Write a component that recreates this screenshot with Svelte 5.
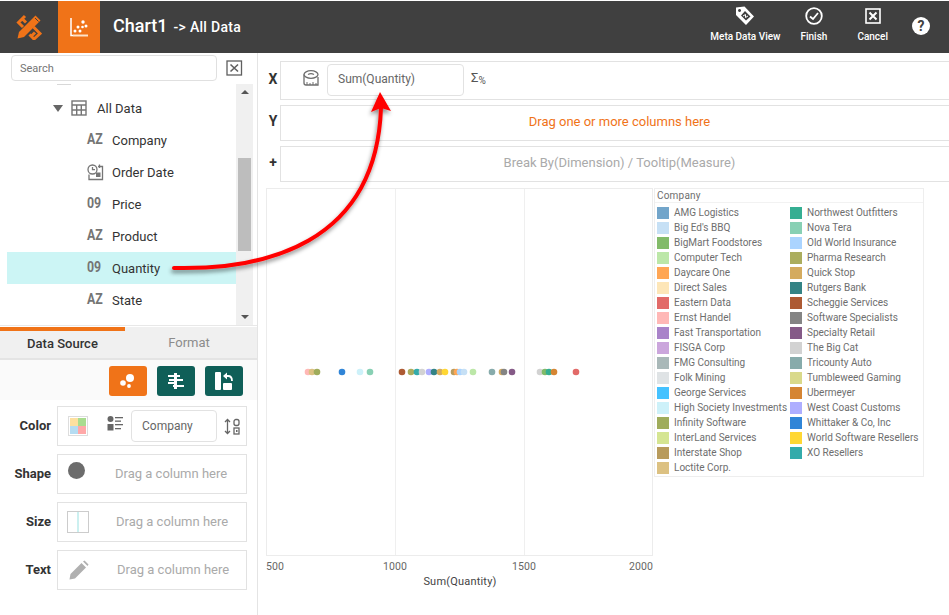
<script>
	const fields = [
		{ name: 'Company', type: 'az' },
		{ name: 'Order Date', type: 'date' },
		{ name: 'Price', type: 'num' },
		{ name: 'Product', type: 'az' },
		{ name: 'Quantity', type: 'num', selected: true },
		{ name: 'State', type: 'az' }
	];

	const legend = [
		['AMG Logistics', '#72a5ca'],
		['Big Ed\'s BBQ', '#c6e0f5'],
		['BigMart Foodstores', '#82bb69'],
		['Computer Tech', '#bce7a8'],
		['Daycare One', '#ffa654'],
		['Direct Sales', '#fde6b8'],
		['Eastern Data', '#e26a68'],
		['Ernst Handel', '#ffb8b6'],
		['Fast Transportation', '#a983c9'],
		['FISGA Corp', '#cba6dc'],
		['FMG Consulting', '#a9b8b8'],
		['Folk Mining', '#dfe3e5'],
		['George Services', '#45c2ff'],
		['High Society Investments', '#cdf1f9'],
		['Infinity Software', '#9fac5b'],
		['InterLand Services', '#d5e592'],
		['Interstate Shop', '#b89b5c'],
		['Loctite Corp.', '#dcc182'],
		['Northwest Outfitters', '#35ae92'],
		['Nova Tera', '#88d0b4'],
		['Old World Insurance', '#abd4ff'],
		['Pharma Research', '#abad5e'],
		['Quick Stop', '#d4ab5f'],
		['Rutgers Bank', '#338385'],
		['Scheggie Services', '#ad5a33'],
		['Software Specialists', '#848484'],
		['Specialty Retail', '#855a87'],
		['The Big Cat', '#d2d2d2'],
		['Tricounty Auto', '#87abab'],
		['Tumbleweed Gaming', '#d9d98a'],
		['Ubermeyer', '#d58533'],
		['West Coast Customs', '#aeaeff'],
		['Whittaker & Co, Inc', '#3085d7'],
		['World Software Resellers', '#ffd733'],
		['XO Resellers', '#33abab']
	];

	// x in page pixels, y is the same for all of them
	const dots = [
		[308, '#ffb8b6'], [312, '#dcc182'], [317, '#9fac5b'], [342, '#3085d7'], [360, '#cdf1f9'],
		[370, '#88d0b4'], [402, '#ad5a33'], [411, '#abad5e'], [417, '#33abab'], [422, '#d2d2d2'],
		[429, '#aeaeff'], [434, '#338385'], [440, '#d4ab5f'], [445, '#ffd733'], [454, '#b89b5c'],
		[457, '#ffa654'], [460, '#abd4ff'], [464, '#c6e0f5'], [473, '#bce7a8'], [492, '#87abab'],
		[502, '#d4ab5f'], [504, '#848484'], [512, '#855a87'], [540, '#d2d2d2'], [545, '#82bb69'],
		[549, '#35ae92'], [554, '#d58533'], [576, '#e26a68']
	];
	const chartLeft = 266;
</script>

<div class="app">
	<header class="topbar">
		<div class="logo">
			<svg width="26" height="26" viewBox="0 0 26 26" fill="none" stroke="#f07318">
				<path d="M19.500 1.500 L24.500 6.500 L8 23 L1.500 24.500 L3 18z" fill="#f07318" stroke="none" />
				<path d="M9 2 L2.500 8.500 L7 13 M6.500 5 L10 8.500" stroke-width="3" />
				<path d="M17.500 13 L24 19.500 L18 25 L13.500 20.500 M19 18.500 L16 21.500" stroke-width="3" />
				<path d="M19 4 L22.500 7.500" stroke="#404040" stroke-width="1" />
			</svg>
		</div>
		<div class="chart-tab">
			<svg width="18" height="19" viewBox="0 0 18 19" fill="#fff">
				<path d="M1 0 V17.500 H18" fill="none" stroke="#fff" stroke-width="1.500" />
				<path d="M3 17.500 H18" fill="none" stroke="#fde3c8" stroke-width="1.500" />
				<circle cx="5" cy="13" r="1.500" /><circle cx="8" cy="9" r="1.500" /><circle cx="10" cy="13" r="1.500" />
				<circle cx="13" cy="4" r="1.700" /><circle cx="12.500" cy="9" r="1.300" /><circle cx="16" cy="8" r="1.500" />
			</svg>
		</div>
		<div class="title"><span class="chart-name">Chart1</span><span class="crumb">-&gt; All Data</span></div>
		<nav class="actions">
			<div class="action meta">
				<svg width="20" height="20" viewBox="0 0 20 20" fill="#fff">
					<path fill-rule="evenodd" d="M1 1.500 L9.500 0.500 L19 10.500 L11 19 L1 9z M4.500 3 a1.500 1.500 0 1 0 0.100 0z M6 9.500 L11 14.500 L15.500 10.500 L10 5z" />
					<path d="M8 10 L10.500 8.500 L10.500 11.500 L13 10" fill="none" stroke="#fff" stroke-width="1" />
				</svg>
				<span>Meta Data View</span>
			</div>
			<div class="action finish">
				<svg width="20" height="20" viewBox="0 0 20 20" fill="none" stroke="#fff" stroke-width="1.800">
					<circle cx="10" cy="10" r="7.800" />
					<path d="M6 10.500 L9 13 L14 7" />
				</svg>
				<span>Finish</span>
			</div>
			<div class="action cancel">
				<svg width="20" height="20" viewBox="0 0 20 20" fill="none" stroke="#fff">
					<rect x="3" y="3" width="14" height="14" stroke-width="1.600" />
					<path d="M6.500 6.500 L13.500 13.500 M13.500 6.500 L6.500 13.500" stroke-width="2" />
				</svg>
				<span>Cancel</span>
			</div>
			<div class="help">?</div>
		</nav>
	</header>

	<div class="workspace">
		<aside class="sidebar">
			<div class="search-row">
				<input class="search" placeholder="Search" />
				<svg class="search-close" width="17" height="16" viewBox="0 0 17 16" fill="none" stroke="#5f5f5f">
					<rect x="1" y="1" width="14.500" height="14" stroke-width="1.300" />
					<path d="M4.500 4.500 L12 11.500 M12 4.500 L4.500 11.500" stroke-width="1.600" />
				</svg>
			</div>

			<div class="tree">
				<div class="tree-list">
					<div class="tree-stub"></div>
					<div class="tree-row root">
						<span class="caret"></span>
						<svg width="16" height="16" viewBox="0 0 16 16" fill="none" stroke="#757575" stroke-width="1.400">
							<rect x="1" y="1" width="14" height="14" />
							<path d="M1 5 H15 M1 10 H15 M5.700 5 V15 M10.300 5 V15" />
						</svg>
						<span>All Data</span>
					</div>
					{#each fields as field}
						<div class="tree-row leaf" class:selected={field.selected}>
							{#if field.type === 'az'}
								<span class="type"><b>AZ</b></span>
							{:else if field.type === 'num'}
								<span class="type"><b>09</b></span>
							{:else}
								<svg class="type-icon" width="17" height="17" viewBox="0 0 17 17" fill="none" stroke="#757575" stroke-width="1.300">
									<circle cx="5.500" cy="5.500" r="4.500" />
									<path d="M5.500 3 V5.700 H8" />
									<path d="M11 2.500 H15.500 V15.500 H2 V10.500" />
									<rect x="9" y="8.500" width="4.500" height="4.500" fill="#757575" stroke="none" />
									<path d="M12.500 0.500 V4" />
								</svg>
							{/if}
							<span>{field.name}</span>
						</div>
					{/each}
				</div>
				<div class="scrollbar">
					<span class="arrow up"></span>
					<div class="thumb"></div>
					<span class="arrow down"></span>
				</div>
			</div>

			<div class="tabs">
				<div class="tab active">Data Source</div>
				<div class="tab">Format</div>
			</div>

			<div class="toolbar">
				<button class="tool orange" aria-label="Chart style">
					<svg width="18" height="16" viewBox="0 0 18 16" fill="#fff">
						<circle cx="11" cy="5" r="4" /><circle cx="4" cy="10" r="2.800" /><circle cx="10" cy="13" r="1.900" />
					</svg>
				</button>
				<button class="tool" aria-label="Group">
					<svg width="18" height="18" viewBox="0 0 18 18" fill="#fff">
						<rect x="7" y="1" width="3" height="16" />
						<rect x="1" y="3" width="12" height="2" /><rect x="2" y="7" width="14" height="2" />
						<rect x="1" y="10" width="9" height="2" /><rect x="6" y="13" width="11" height="2" />
					</svg>
				</button>
				<button class="tool" aria-label="Swap">
					<svg width="18" height="20" viewBox="0 0 18 20" fill="#fff">
						<rect x="0" y="1" width="6" height="18" rx="1" />
						<rect x="8" y="12" width="9" height="7" rx="1" />
						<path d="M8 5 L12 1.500 V8.500z" />
						<path d="M11 5 H13 Q17 5 17 10" fill="none" stroke="#fff" stroke-width="1.800" />
					</svg>
				</button>
			</div>

			<div class="binding">
				<label>Color</label>
				<div class="drop color-drop">
					<span class="palette"><i></i><i></i><i></i><i></i></span>
					<svg class="list-icon" width="16" height="15" viewBox="0 0 16 15" fill="#666">
						<circle cx="3.500" cy="3" r="3" /><rect x="0.500" y="8" width="6" height="6.500" />
						<rect x="8" y="1" width="8" height="1.300" /><rect x="8" y="4.500" width="6" height="1.300" />
						<rect x="8" y="8" width="8" height="1.300" /><rect x="8" y="12" width="6" height="1.300" />
					</svg>
					<div class="pill small">Company</div>
					<svg class="sort-icon" width="17" height="17" viewBox="0 0 17 17" fill="none" stroke="#666" stroke-width="1.300">
						<path d="M3.500 1.500 V15.500 M1 4 L3.500 1.500 L6 4 M1 13 L3.500 15.500 L6 13" />
						<rect x="10" y="1.500" width="5" height="6" rx="2" />
						<rect x="10" y="10" width="5" height="6" />
						<rect x="12" y="12" width="1.500" height="2" fill="#666" stroke="none" />
					</svg>
				</div>
			</div>
			<div class="binding">
				<label>Shape</label>
				<div class="drop">
					<span class="shape-dot"></span>
					<span class="hint shape-hint">Drag a column here</span>
				</div>
			</div>
			<div class="binding">
				<label>Size</label>
				<div class="drop">
					<span class="size-box"></span>
					<span class="hint size-hint">Drag a column here</span>
				</div>
			</div>
			<div class="binding">
				<label>Text</label>
				<div class="drop">
					<svg class="pencil" width="20" height="20" viewBox="0 0 20 20" fill="#b0b0b0">
						<path d="M0.500 19.500 L1.500 14 L12.500 3 L17 7.500 L6 18.500z" />
						<path d="M14 1.500 L15.500 0.500 L19.500 4.500 L18.500 6z" />
					</svg>
					<span class="hint text-hint">Drag a column here</span>
				</div>
			</div>
		</aside>

		<main class="main">
			<div class="shelf x-shelf">
				<span class="axis">X</span>
				<div class="shelf-box">
					<svg class="tape" width="16" height="16" viewBox="0 0 16 16" fill="none" stroke="#6f6f6f" stroke-width="1.300">
						<ellipse cx="8" cy="4.500" rx="7" ry="3.800" />
						<path d="M1 4.500 V13 Q1 15 3 15 H15 V7" />
						<path d="M5 4.500 Q8 2.800 11 4.500" />
						<path d="M4 12 V15 M7 13 V15 M10 12 V15 M13 13 V15" stroke-width="1" />
					</svg>
					<div class="pill">Sum(Quantity)</div>
					<span class="sigma">Σ<small>%</small></span>
				</div>
			</div>
			<div class="shelf y-shelf">
				<span class="axis">Y</span>
				<div class="shelf-box center orange-text">Drag one or more columns here</div>
			</div>
			<div class="shelf plus-shelf">
				<span class="axis">+</span>
				<div class="shelf-box center grey-text">Break By(Dimension) / Tooltip(Measure)</div>
			</div>

			<div class="chart-area">
				<svg class="plot" width="388" height="400" viewBox="0 0 388 400">
					<rect x="0.500" y="0.500" width="386" height="367" fill="#fff" stroke="#ececec" />
					<path d="M129.500 1 V367 M258.500 1 V367" stroke="#efefef" />
					{#each dots as [x, color]}
						<circle cx={x - chartLeft} cy="184" r="3.300" fill={color} />
					{/each}
					<text x="0" y="382" class="tick">500</text>
					<text x="129" y="382" class="tick" text-anchor="middle">1000</text>
					<text x="258" y="382" class="tick" text-anchor="middle">1500</text>
					<text x="387" y="382" class="tick" text-anchor="end">2000</text>
					<text x="194" y="397" class="axis-title" text-anchor="middle">Sum(Quantity)</text>
				</svg>
				<section class="legend">
					<div class="legend-title">Company</div>
					<div class="legend-grid">
						{#each legend as [name, color]}
							<div class="legend-item">
								<span class="swatch" style:background={color}></span>
								<span>{name}</span>
							</div>
						{/each}
					</div>
				</section>
			</div>
		</main>
	</div>

	<!-- the annotation arrow sits over both panes -->
	<svg class="callout" width="949" height="615" viewBox="0 0 949 615">
		<defs>
			<filter id="arrow-shadow" x="-20%" y="-20%" width="140%" height="140%">
				<feDropShadow dx="-1" dy="3" stdDeviation="2" flood-color="#000" flood-opacity="0.45" />
			</filter>
		</defs>
		<g filter="url(#arrow-shadow)">
			<path d="M174 268 C 262 270 376 246 381 108" fill="none" stroke="#f00" stroke-width="4" stroke-linecap="round" />
			<path d="M380 92 L371 112 L381 108 L391 111z" fill="#f00" />
		</g>
	</svg>
</div>

<style>
	:global(body) {
		margin: 0;
		background: #fff;
		font-family: Roboto, "Liberation Sans", sans-serif;
	}

	.app {
		position: relative;
		width: 949px;
		height: 615px;
		overflow: hidden;
		color: #333;
	}

	.topbar {
		display: flex;
		align-items: stretch;
		height: 52px;
		margin-top: 1px;
		background: #404040;
		color: #fff;
	}

	.logo {
		display: flex;
		align-items: center;
		justify-content: center;
		width: 58px;
	}

	.chart-tab {
		display: flex;
		align-items: center;
		justify-content: center;
		width: 42px;
		background: #f07318;
	}

	.title {
		display: flex;
		align-items: baseline;
		gap: 6px;
		padding: 14px 0 0 13px;
	}

	.chart-name {
		font-size: 18px;
		font-weight: 500;
	}

	.crumb {
		font-size: 14px;
		font-weight: 500;
		letter-spacing: 0.3px;
	}

	.actions {
		display: flex;
		align-items: flex-start;
		margin-left: auto;
		padding-right: 19px;
	}

	.action {
		display: flex;
		flex-direction: column;
		align-items: center;
		gap: 5px;
		padding-top: 5px;
		font-size: 10px;
		font-weight: 500;
		line-height: 12px;
	}

	.finish {
		margin-left: 20px;
	}

	.cancel {
		margin-left: 30px;
	}

	.help {
		width: 18px;
		height: 18px;
		margin: 16px 0 0 24px;
		border-radius: 50%;
		background: #fff;
		color: #404040;
		font-size: 14px;
		font-weight: 700;
		line-height: 18px;
		text-align: center;
	}

	.workspace {
		display: flex;
		height: 562px;
	}

	.sidebar {
		flex: none;
		width: 257px;
		border-right: 1px solid #e4e4e4;
	}

	.search-row {
		display: flex;
		align-items: flex-start;
		height: 31px;
		padding: 2px 0 0 11px;
		box-sizing: border-box;
	}

	.search {
		box-sizing: border-box;
		width: 206px;
		height: 26px;
		padding: 0 8px;
		border: 1px solid #e0e0e0;
		border-radius: 4px;
		font: 11px Roboto, sans-serif;
		outline: none;
	}

	.search::placeholder {
		color: #757575;
		opacity: 1;
	}

	.search-close {
		margin: 5px 0 0 9px;
	}

	.tree {
		display: flex;
		height: 241px;
		padding-left: 7px;
		padding-right: 4px;
	}

	.tree-list {
		flex: 1;
		padding-top: 8px;
		position: relative;
	}

	.tree-stub {
		position: absolute;
		top: 0;
		left: 50px;
		width: 14px;
		height: 1px;
		background: #d8d8d8;
	}

	.tree-row {
		display: flex;
		align-items: center;
		height: 32px;
		font-size: 13px;
	}

	.root {
		padding-left: 46px;
	}

	.caret {
		width: 0;
		height: 0;
		margin-right: 8px;
		border-left: 5px solid transparent;
		border-right: 5px solid transparent;
		border-top: 7px solid #666;
	}

	.root svg {
		margin-right: 10px;
	}

	.leaf {
		padding-left: 80px;
	}

	.selected {
		background: #ccf5f5;
	}

	.type {
		width: 25px;
		color: #757575;
		font-size: 14px;
	}

	/* the field type letters are narrower than Roboto's bold */
	.type b {
		display: inline-block;
		font-weight: 700;
		transform: translateY(-1px) scaleX(0.88);
		transform-origin: left center;
	}

	.type-icon {
		margin-right: 8px;
	}

	.scrollbar {
		display: flex;
		flex-direction: column;
		align-items: center;
		flex: none;
		width: 17px;
		background: #f0f0f0;
	}

	.arrow {
		width: 0;
		height: 0;
		border-left: 4px solid transparent;
		border-right: 4px solid transparent;
	}

	.up {
		margin-top: 6px;
		border-bottom: 4px solid #555;
	}

	.down {
		margin-top: auto;
		margin-bottom: 6px;
		border-top: 4px solid #555;
	}

	.thumb {
		width: 13px;
		height: 93px;
		margin-top: 64px;
		background: #bdbdbd;
	}

	.tabs {
		display: grid;
		grid-template-columns: 125px 1fr;
		height: 31px;
		padding-top: 2px;
		background: linear-gradient(#e8e8e8 1px, #fff 1px);
		border-bottom: 2px solid #e4e4e4;
	}

	.tab {
		padding: 8px 4px 0 0;
		background: #f0f0f0;
		color: #8c8c8c;
		font-size: 13px;
		text-align: center;
	}

	.active {
		border-top: 4px solid #f07318;
		padding: 5px 0 0;
		color: #333;
		font-weight: 500;
	}

	.toolbar {
		display: flex;
		justify-content: flex-end;
		gap: 10px;
		height: 40px;
		padding: 6px 14px 0 0;
		box-sizing: border-box;
		background: #fafafa;
	}

	.tool {
		display: flex;
		align-items: center;
		justify-content: center;
		width: 38px;
		height: 30px;
		padding: 0;
		border: none;
		border-radius: 3px;
		background: #0f5f58;
	}

	.orange {
		background: #f07318;
	}

	.binding {
		display: flex;
		align-items: center;
		height: 40px;
		margin: 6px 10px 8px 0;
	}

	.binding label {
		flex: none;
		width: 51px;
		margin: -2px 6px 0 0;
		color: #333;
		font-size: 13px;
		font-weight: 700;
		text-align: right;
	}

	.drop {
		display: flex;
		align-items: center;
		box-sizing: border-box;
		width: 190px;
		height: 40px;
		border: 1px solid #e2e2e2;
	}

	.palette {
		display: grid;
		grid-template-columns: 8px 8px;
		grid-template-rows: 8px 8px;
		margin-left: 10px;
		padding: 1px;
		border: 1px solid #ddd;
	}

	.palette i:nth-child(1) {
		background: #fde0a0;
	}

	.palette i:nth-child(2) {
		background: #a9dc8f;
	}

	.palette i:nth-child(3) {
		background: #b5dcf2;
	}

	.palette i:nth-child(4) {
		background: #ffa8a8;
	}

	.list-icon {
		margin: -6px 0 0 19px;
	}

	.pill {
		box-sizing: border-box;
		width: 137px;
		height: 32px;
		margin: -1px 0 0 8px;
		padding-left: 10px;
		border: 1px solid #e2e2e2;
		border-radius: 4px;
		color: #666;
		font-size: 12px;
		line-height: 29px;
	}

	.small {
		width: 86px;
		margin: 0 0 0 8px;
		line-height: 30px;
	}

	.sort-icon {
		margin-left: 7px;
	}

	.shape-dot {
		width: 17px;
		height: 17px;
		margin: -8px 0 0 10px;
		border-radius: 50%;
		background: #6c6c6c;
	}

	.size-box {
		box-sizing: border-box;
		width: 22px;
		height: 22px;
		margin-left: 9px;
		border: 1px solid #ccc;
		background: linear-gradient(#ccf0f0, #ccf0f0) center / 2px 100% no-repeat;
	}

	.pencil {
		margin-left: 11px;
	}

	.hint {
		margin-top: -2px;
		color: #aaa;
		font-size: 13px;
	}

	.shape-hint {
		margin-left: 30px;
	}

	.size-hint {
		margin-left: 27px;
	}

	.text-hint {
		margin-left: 28px;
	}

	.main {
		flex: 1;
		min-width: 0;
		overflow: hidden;
		padding: 8px 0 0 8px;
	}

	.shelf {
		display: flex;
		align-items: center;
		margin-bottom: 5px;
	}

	.axis {
		flex: none;
		width: 14px;
		margin-top: -4px;
		color: #333;
		font-size: 14px;
		font-weight: 700;
		text-align: center;
	}

	.shelf-box {
		display: flex;
		align-items: center;
		flex: none;
		box-sizing: border-box;
		width: 679px;
		height: 36px;
		border: 1px solid #e2e2e2;
		font-size: 13px;
	}

	.x-shelf .shelf-box {
		height: 39px;
	}

	.center {
		justify-content: center;
		padding-bottom: 4px;
	}

	.orange-text {
		color: #f07318;
	}

	.grey-text {
		color: #aaa;
	}

	.tape {
		margin: -6px 0 0 22px;
	}

	.sigma {
		margin: -6px 0 0 7px;
		color: #555;
		font-size: 13px;
	}

	.sigma small {
		font-size: 10px;
		position: relative;
		top: 2px;
	}

	.chart-area {
		display: flex;
		align-items: flex-start;
		margin-top: 6px;
	}

	.plot {
		flex: none;
	}

	.tick,
	.axis-title {
		font-family: Roboto, sans-serif;
		font-size: 10.500px;
		fill: #666;
		letter-spacing: 0.1px;
	}

	.axis-title {
		fill: #444;
		font-size: 11px;
		letter-spacing: 0.2px;
	}

	.legend {
		box-sizing: border-box;
		width: 270px;
		height: 289px;
		border: 1px solid #eee;
		color: #6e6e6e;
		font-size: 10px;
	}

	.legend-title {
		height: 13px;
		padding-left: 2px;
		border-bottom: 1px solid #f2f2f2;
		font-size: 10px;
		line-height: 13px;
		letter-spacing: 0.2px;
	}

	.legend-grid {
		display: grid;
		grid-template-rows: repeat(18, 15px);
		grid-template-columns: 133px 1fr;
		grid-auto-flow: column;
		padding: 2px 0 0 2px;
	}

	.legend-item {
		display: flex;
		align-items: center;
		gap: 5px;
		white-space: nowrap;
	}

	.swatch {
		flex: none;
		width: 12px;
		height: 12px;
	}

	.callout {
		position: absolute;
		top: 0;
		left: 0;
		pointer-events: none;
	}
</style>
